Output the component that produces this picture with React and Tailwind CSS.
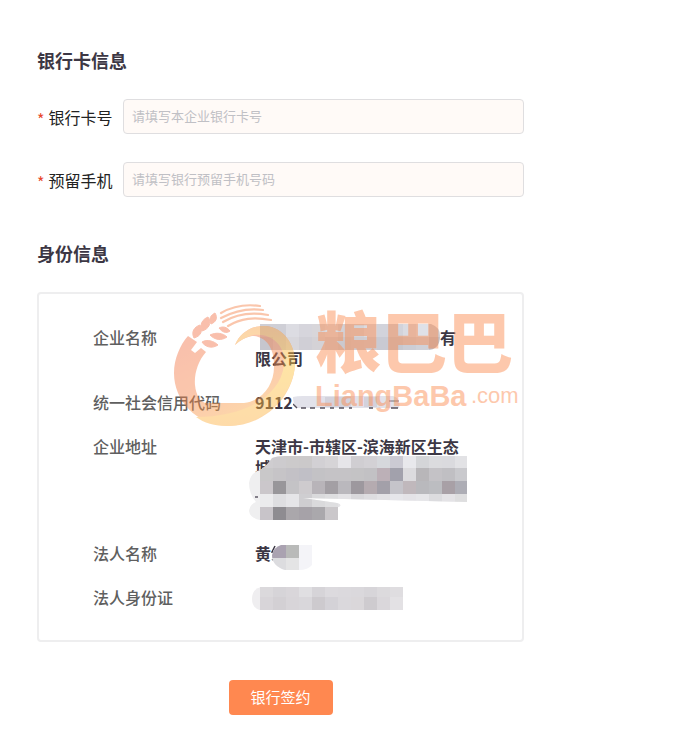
import React, { useState } from "react";

const CELL = 13;

const NAME_ROWS = [
  ["#cfcfd6", "#cfcfd6", "#dcdce2", "#d6d5dc", "#d8d6da", "#dcdade", "#d3d1d6", "#d5d3d7", "#dcdbe0", "#d2d3db", "#d2d3db", "#dadbe2", "#dfe1e8", "#cfcdd3"],
  ["#c6c6ce", "#cfcfd5", "#d8d7dc", "#d0cfd6", "#d4d2d6", "#d0ced3", "#cbc9ce", "#cfccd1", "#cfced4", "#c9cad3", "#c7c8d0", "#cccdd5", "#d0d1d8", "#bfbdc4"],
];

const ADDRESS_ROWS = [
  ["#cfcdd0", "#cdcbce", "#cccacb", "#cbc9ca", "#d2d0d4", "#d6d4d7", "#e6e5e9", "#d0ced2", "#d3d1d5", "#d6d8dc", "#cbcad3", "#e8e8ec", "#d4d5d8", "#dbdbde", "#dadade", "#e2e2e5"],
  ["#c9c8c9", "#c6c4c7", "#c3c1c6", "#c0bfc6", "#c3c2c5", "#c5c3c6", "#c5c3c6", "#c4c3c5", "#c2c1c4", "#bcb0b7", "#a2a1ac", "#dcdbde", "#b8b6b9", "#c4c2c6", "#c0bfc3", "#c9c9cd"],
  ["#cbc7cb", "#98969a", "#c4c3c6", "#cecbce", "#b8b4b9", "#a39fa4", "#bab8bd", "#9d989e", "#b5abb0", "#a3a0a9", "#c5c4ca", "#c0b8bc", "#b9b9bd", "#bcbdc1", "#a8a0a6", "#adadb5"],
  ["#ebebed", "#dedee1", "#e5e5e8", "#cfced1", "#dadadc", "#dedee0", "#e4e3e6", "#d9d8db", "#dedde0", "#e3e2e5", "#e6e6ea", "#e4e3e7", "#e6e6e9", "#dcdcdf", "#e4e3e6", "#dededf"],
  ["#c8c4c9", "#8e8c91", "#aaa7ab", "#a6a2a8", "#aaa8ac", "#cac7ca"],
];

const ID_ROWS = [
  ["#dbd9dc", "#d6d4d8", "#d9d6da", "#e0dfe2", "#d6d4d8", "#dcdade", "#dbd9dd", "#dad8dc", "#d7d5d9", "#dcdadd", "#dfdde0"],
  ["#d8d5d9", "#d3d0d4", "#d8d5d9", "#d9d7db", "#cdcace", "#d4d2d7", "#dad8dc", "#dad7da", "#cecbcf", "#dad7db", "#e3e1e4"],
];

function Cells({ rows, x = 0, y = 0 }) {
  return rows.map((row, r) =>
    row.map((fill, c) => (
      <rect
        key={`${r}-${c}`}
        x={x + c * CELL}
        y={y + r * CELL}
        width={CELL}
        height={CELL}
        fill={fill}
      />
    ))
  );
}

function NameMask() {
  return (
    <svg width="185" height="27" viewBox="0 0 185 27" className="inline-block -my-1 align-top" aria-hidden="true">
      <clipPath id="name-clip">
        <path d="M5 1H176Q185 4 185 13Q185 27 172 27H5Z" />
      </clipPath>
      <g clipPath="url(#name-clip)">
        <Cells rows={NAME_ROWS} x={5} y={1} />
      </g>
    </svg>
  );
}

function CodeMask() {
  return (
    <svg width="110" height="16" viewBox="0 0 110 16" className="mt-1 inline-block align-top" aria-hidden="true">
      <path d="M0 1Q4 0 10 0H100Q108 2 106 12H4Q0 8 0 1Z" fill="#e2e2ea" />
      <path d="M32 1h26v10H32zM71 1h13v10H71z" fill="#d3d2dc" />
      <path d="M0 8l4 4M8 12h5M17 12h5M27 12h5M37 12h4M46 12h5M56 12h3M76 12h4M98 12h7" stroke="#55505c" strokeWidth="1.4" />
      <path d="M96 5h10" stroke="#77727c" strokeWidth="1" />
    </svg>
  );
}

function AddressMask() {
  return (
    <svg width="220" height="66" viewBox="0 0 220 66" className="absolute top-5 -left-2 max-w-none" aria-hidden="true">
      <clipPath id="address-clip">
        <path d="M25 2Q30 0 38 0H221V46L56 42L90 47Q97 49 90 52L70 51H91V64H13Q3 62 2 55Q3 48 9 46Q2 38 2 27Q3 17 13 14Q20 10 25 2Z" />
      </clipPath>
      <g clipPath="url(#address-clip)">
        <rect width="221" height="66" fill="#efeff0" />
        <Cells rows={ADDRESS_ROWS} x={13} y={-1} />
      </g>
      <path d="M8 41h3" stroke="#55505c" strokeWidth="1.4" />
    </svg>
  );
}

function PersonMask() {
  return (
    <svg width="42" height="26" viewBox="0 0 42 26" className="mt-0.5 -mb-2 inline-block align-top" aria-hidden="true">
      <path d="M4 1L1 7h4M1 15l3-2" stroke="#3c3744" strokeWidth="1.5" fill="none" />
      <clipPath id="person-clip">
        <path d="M10 0H41V20Q37 25 28 25H14Q1 21 1 10Q3 2 10 0Z" />
      </clipPath>
      <g clipPath="url(#person-clip)">
        <rect width="42" height="26" fill="#f4f4f8" />
        <path d="M0 0h15v13H0z" fill="#aaa2b1" />
        <path d="M15 0h13v13H15z" fill="#b9bab9" />
        <path d="M0 13h15v13H0z" fill="#dcdcdf" />
        <path d="M15 13h13v13H15z" fill="#e4e4e5" />
      </g>
    </svg>
  );
}

function IdMask() {
  return (
    <svg width="152" height="23" viewBox="0 0 152 23" className="-mb-0.5 -ml-1 block" aria-hidden="true">
      <path d="M10 0Q1 2 1 12Q1 21 9 23Z" fill="#efeef0" />
      <Cells rows={ID_ROWS} x={9} y={-3} />
    </svg>
  );
}

function Watermark() {
  return (
    <svg
      width="350"
      height="126"
      viewBox="173 303 350 126"
      className="absolute top-2 left-[134px] opacity-45 pointer-events-none"
      role="img"
      aria-label="粮巴巴 LiangBaBa.com"
    >
      <defs>
        <linearGradient id="ring" x1="0.1" y1="0.1" x2="0.6" y2="1">
          <stop offset="0" stopColor="#f27349" />
          <stop offset="0.5" stopColor="#f6834a" />
          <stop offset="1" stopColor="#fdb042" />
        </linearGradient>
        <linearGradient id="edge" x1="0.5" y1="0" x2="0.5" y2="1">
          <stop offset="0" stopColor="#f9a044" />
          <stop offset="0.4" stopColor="#fdc43a" />
          <stop offset="1" stopColor="#fdb042" />
        </linearGradient>
      </defs>

      {/* Ring */}
      <path
        d="M188 337L197 343L191 351L195 354L201 349L206 353C198 362 194 375 195 386C196 396 200 404 207 404H244C262 402 274 386 274 368C275 350 266 337 252 337C246 338 240 341 235 346C240 334 252 326 266 327C284 329 296 346 295 366C293 400 262 428 227 427C196 425 174 402 174 374C174 360 180 346 188 337Z"
        fill="url(#ring)"
      />
      <path
        d="M235 346C240 334 252 326 266 327C284 329 296 346 295 366C293 397 264 425 229 427C214 427 204 424 196 418C240 418 280 400 284 366C286 347 272 334 254 336C246 338 240 341 235 346Z"
        fill="url(#edge)"
      />

      {/* Wheat ear */}
      <g fill="#f27349" stroke="#f27349" strokeWidth="1">
        <path d="M194 339C191 333 194 328 200 326C203 332 201 337 194 339Z" />
        <path d="M202 332C199 325 203 320 208 318C212 324 209 330 202 332Z" />
        <path d="M211 325C208 320 211 316 215 314C218 319 216 323 211 325Z" />
        <path d="M202 343C207 340 214 342 218 346C212 350 205 348 202 343Z" />
        <path d="M210 336C216 333 223 334 227 338C221 342 215 341 210 336Z" />
        <path d="M219 329C223 327 227 328 230 332C226 335 222 333 219 329Z" />
      </g>
      <g fill="none" stroke="#f6834a" strokeWidth="2.2" strokeLinecap="round">
        <path d="M221 314C233 307 246 305 260 307" />
        <path d="M221 319C236 311 249 309 263 311" />
        <path d="M223 323C238 314 252 313 268 316" />
        <path d="M228 327C241 319 254 318 271 321" />
      </g>

      <g fill="#fb8749">
        <text x="315" y="368" className="font-['Noto_Sans_CJK_SC',sans-serif] text-[66px] font-black">
          粮巴巴
        </text>
        <text x="315" y="407" className="font-['Liberation_Sans',sans-serif] text-[29px] font-bold">
          LiangBaBa
        </text>
        <text x="471" y="404" className="font-['Liberation_Sans',sans-serif] text-[22px]">
          .com
        </text>
      </g>
    </svg>
  );
}

function Field({ id, label, placeholder, type = "text" }) {
  const [value, setValue] = useState("");

  return (
    <div className="flex items-center">
      <label htmlFor={id} className="flex w-[86px] shrink-0 items-center gap-1 whitespace-nowrap text-base text-[#222]">
        <span className="pt-1 leading-5 text-[#e8472c]">*</span>
        {label}
      </label>
      <input
        id={id}
        type={type}
        required
        value={value}
        onChange={(e) => setValue(e.target.value)}
        placeholder={placeholder}
        className="h-[35px] min-w-0 flex-1 rounded border border-[#dfdee0] bg-[#fffaf7] px-2 pb-0.5 text-[13px] text-[#333] placeholder-[#c0c0c5] focus:outline-none focus:border-[#ff8a50]"
      />
    </div>
  );
}

function InfoRow({ label, children }) {
  return (
    <div className="flex leading-[21px]">
      <dt className="w-[162px] shrink-0 font-medium text-[#5f5f5f]">{label}</dt>
      <dd className="relative w-[213px] font-semibold text-[#3c3744]">{children}</dd>
    </div>
  );
}

export default function App() {
  return (
    <main className="bg-white px-[37px] pt-[46px] pb-4 font-['Noto_Sans_CJK_SC',sans-serif]">
      <form className="max-w-[487px]" onSubmit={(e) => e.preventDefault()}>
        <h2 className="text-lg font-semibold text-[#3c3744]">银行卡信息</h2>
        <div className="mt-[25px] flex flex-col gap-7">
          <Field id="card" label="银行卡号" placeholder="请填写本企业银行卡号" />
          <Field id="phone" type="tel" label="预留手机" placeholder="请填写银行预留手机号码" />
        </div>

        <h2 className="mt-[42px] text-lg font-semibold text-[#3c3744]">身份信息</h2>
        <section className="relative mt-[25px] rounded border-2 border-[#eeeeef] pt-[33px] pr-4 pb-8 pl-[54px]">
          <dl className="flex flex-col gap-[23px] text-base">
            <InfoRow label="企业名称">
              <NameMask />有限公司
            </InfoRow>
            <InfoRow label="统一社会信用代码">
              9112
              <CodeMask />
            </InfoRow>
            <InfoRow label="企业地址">
              <p className="min-h-[84px]">天津市-市辖区-滨海新区生态城</p>
              <AddressMask />
            </InfoRow>
            <InfoRow label="法人名称">
              黄
              <PersonMask />
            </InfoRow>
            <InfoRow label="法人身份证">
              <IdMask />
            </InfoRow>
          </dl>
          <Watermark />
        </section>

        <button
          type="submit"
          className="mx-auto mt-[38px] block h-[35px] w-[104px] rounded-sm bg-[#ff8850] text-[15px] text-white hover:bg-[#ff7a3c]"
        >
          银行签约
        </button>
      </form>
    </main>
  );
}
